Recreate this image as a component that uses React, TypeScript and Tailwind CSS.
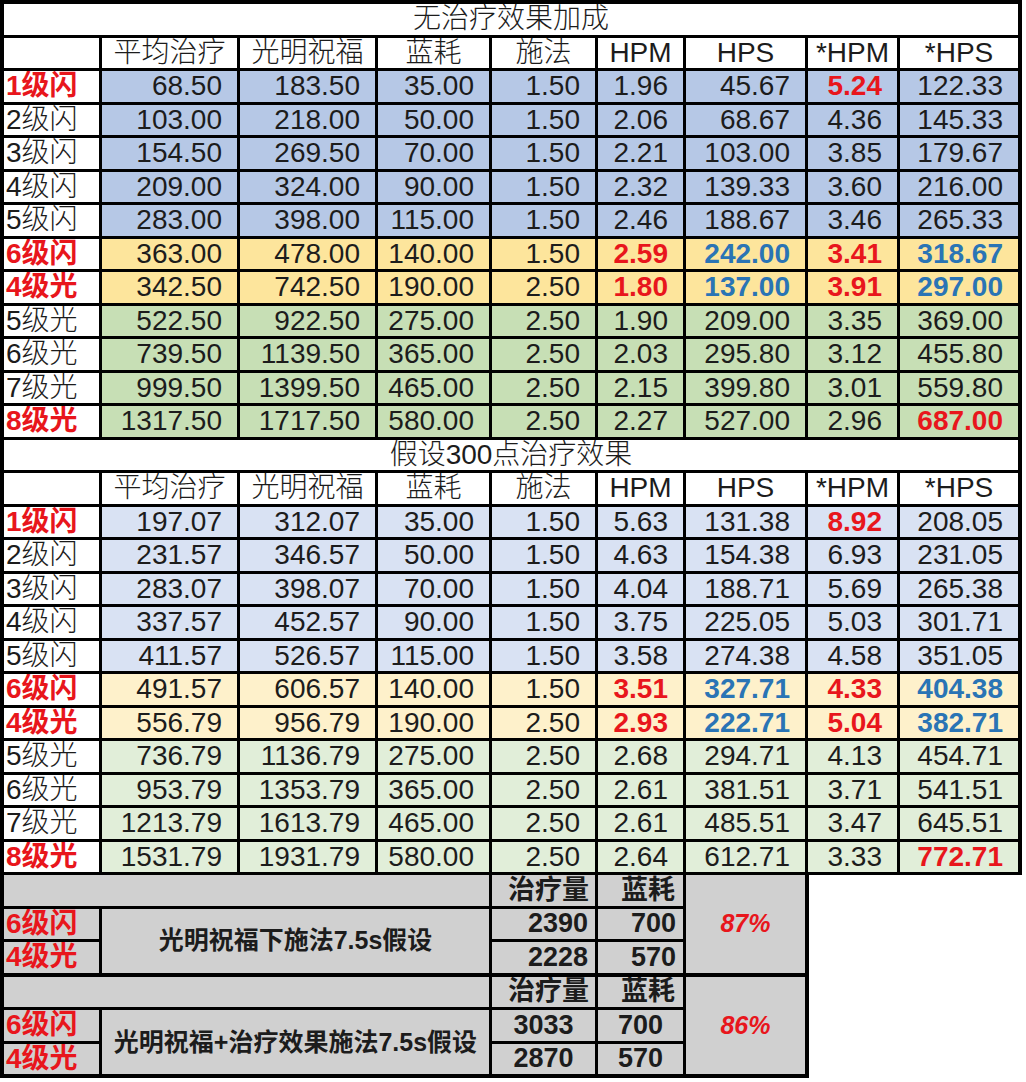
import React from "react";

type Row = { label: string; hot?: boolean; tone: "blue" | "orange" | "green"; cells: string[] };

// "!" marks red bold, "#" marks blue bold
const noBonus: Row[] = [
  { label: "1级闪", hot: true, tone: "blue", cells: ["68.50", "183.50", "35.00", "1.50", "1.96", "45.67", "5.24!", "122.33"] },
  { label: "2级闪", tone: "blue", cells: ["103.00", "218.00", "50.00", "1.50", "2.06", "68.67", "4.36", "145.33"] },
  { label: "3级闪", tone: "blue", cells: ["154.50", "269.50", "70.00", "1.50", "2.21", "103.00", "3.85", "179.67"] },
  { label: "4级闪", tone: "blue", cells: ["209.00", "324.00", "90.00", "1.50", "2.32", "139.33", "3.60", "216.00"] },
  { label: "5级闪", tone: "blue", cells: ["283.00", "398.00", "115.00", "1.50", "2.46", "188.67", "3.46", "265.33"] },
  { label: "6级闪", hot: true, tone: "orange", cells: ["363.00", "478.00", "140.00", "1.50", "2.59!", "242.00#", "3.41!", "318.67#"] },
  { label: "4级光", hot: true, tone: "orange", cells: ["342.50", "742.50", "190.00", "2.50", "1.80!", "137.00#", "3.91!", "297.00#"] },
  { label: "5级光", tone: "green", cells: ["522.50", "922.50", "275.00", "2.50", "1.90", "209.00", "3.35", "369.00"] },
  { label: "6级光", tone: "green", cells: ["739.50", "1139.50", "365.00", "2.50", "2.03", "295.80", "3.12", "455.80"] },
  { label: "7级光", tone: "green", cells: ["999.50", "1399.50", "465.00", "2.50", "2.15", "399.80", "3.01", "559.80"] },
  { label: "8级光", hot: true, tone: "green", cells: ["1317.50", "1717.50", "580.00", "2.50", "2.27", "527.00", "2.96", "687.00!"] },
];

const withBonus: Row[] = [
  { label: "1级闪", hot: true, tone: "blue", cells: ["197.07", "312.07", "35.00", "1.50", "5.63", "131.38", "8.92!", "208.05"] },
  { label: "2级闪", tone: "blue", cells: ["231.57", "346.57", "50.00", "1.50", "4.63", "154.38", "6.93", "231.05"] },
  { label: "3级闪", tone: "blue", cells: ["283.07", "398.07", "70.00", "1.50", "4.04", "188.71", "5.69", "265.38"] },
  { label: "4级闪", tone: "blue", cells: ["337.57", "452.57", "90.00", "1.50", "3.75", "225.05", "5.03", "301.71"] },
  { label: "5级闪", tone: "blue", cells: ["411.57", "526.57", "115.00", "1.50", "3.58", "274.38", "4.58", "351.05"] },
  { label: "6级闪", hot: true, tone: "orange", cells: ["491.57", "606.57", "140.00", "1.50", "3.51!", "327.71#", "4.33!", "404.38#"] },
  { label: "4级光", hot: true, tone: "orange", cells: ["556.79", "956.79", "190.00", "2.50", "2.93!", "222.71#", "5.04!", "382.71#"] },
  { label: "5级光", tone: "green", cells: ["736.79", "1136.79", "275.00", "2.50", "2.68", "294.71", "4.13", "454.71"] },
  { label: "6级光", tone: "green", cells: ["953.79", "1353.79", "365.00", "2.50", "2.61", "381.51", "3.71", "541.51"] },
  { label: "7级光", tone: "green", cells: ["1213.79", "1613.79", "465.00", "2.50", "2.61", "485.51", "3.47", "645.51"] },
  { label: "8级光", hot: true, tone: "green", cells: ["1531.79", "1931.79", "580.00", "2.50", "2.64", "612.71", "3.33", "772.71!"] },
];

const headers = ["平均治疗", "光明祝福", "蓝耗", "施法", "HPM", "HPS", "*HPM", "*HPS"];

const strong = {
  blue: "bg-[#b6c8e6]",
  orange: "bg-[#fde59c]",
  green: "bg-[#c7dfb5]",
};
const soft = {
  blue: "bg-[#d9e2f3]",
  orange: "bg-[#fef1cb]",
  green: "bg-[#e1eed9]",
};

const cell = "flex items-center overflow-hidden whitespace-nowrap";

function Num({ v, bg }: { v: string; bg: string }) {
  let color = "text-[#1c1c1c]";
  let text = v;
  if (v.endsWith("!")) {
    color = "text-[#e8161c] font-bold";
    text = v.slice(0, -1);
  } else if (v.endsWith("#")) {
    color = "text-[#2a74b5] font-bold";
    text = v.slice(0, -1);
  }
  return <div className={`${cell} ${bg} ${color} justify-end pr-[15px]`}>{text}</div>;
}

function Sheet({ title, rows, soft: isSoft, top }: { title: string; rows: Row[]; soft?: boolean; top?: boolean }) {
  const palette = isSoft ? soft : strong;
  return (
    <div
      className={`grid w-[1022px] grid-cols-[95px_135px_135px_111px_103px_85px_119px_89px_118px] auto-rows-[30.5px] gap-[3px] bg-black px-[4px] ${
        top ? "pt-[4px]" : "pt-[3px] pb-[3px]"
      }`}
    >
      <div className={`${cell} col-span-9 justify-center bg-white font-light`}>{title}</div>
      <div className="bg-white" />
      {headers.map((h) => (
        <div key={h} className={`${cell} justify-center bg-white font-light`}>
          {h}
        </div>
      ))}
      {rows.map((r) => (
        <React.Fragment key={r.label}>
          <div
            className={`${cell} justify-start bg-white pl-[2px] ${
              r.hot ? "font-bold text-[#e8161c]" : "font-light"
            }`}
          >
            {r.label}
          </div>
          {r.cells.map((v, i) => (
            <Num key={i} v={v} bg={palette[r.tone]} />
          ))}
        </React.Fragment>
      ))}
    </div>
  );
}

function Summary({ desc, heal, mana, pct, centered }: { desc: string; heal: string[]; mana: string[]; pct: string; centered?: boolean }) {
  const just = centered ? "justify-center" : "justify-end pr-[7px]";
  return (
    <div className="grid w-[809px] grid-cols-[95px_135px_135px_111px_103px_85px_119px] auto-rows-[30.5px] gap-[3px] bg-black px-[4px] pb-[4px]">
      <div className="col-span-4 bg-[#d0d0d0]" />
      <div className={`${cell} justify-end bg-[#d0d0d0] pr-[6px] text-[27px] font-bold`}>治疗量</div>
      <div className={`${cell} justify-end bg-[#d0d0d0] pr-[8px] text-[27px] font-bold`}>蓝耗</div>
      <div className={`${cell} row-span-3 justify-center bg-[#d0d0d0] text-[25px] font-bold italic text-[#e8161c]`}>
        {pct}
      </div>
      <div className={`${cell} bg-[#d0d0d0] pl-[2px] text-[28px] font-bold text-[#e8161c]`}>6级闪</div>
      <div className={`${cell} col-span-3 row-span-2 justify-center bg-[#d0d0d0] text-[25px] font-bold`}>{desc}</div>
      <div className={`${cell} ${just} bg-[#d0d0d0] text-[27px] font-bold`}>{heal[0]}</div>
      <div className={`${cell} ${just} bg-[#d0d0d0] text-[27px] font-bold`}>{mana[0]}</div>
      <div className={`${cell} bg-[#d0d0d0] pl-[2px] text-[28px] font-bold text-[#e8161c]`}>4级光</div>
      <div className={`${cell} ${just} bg-[#d0d0d0] text-[27px] font-bold`}>{heal[1]}</div>
      <div className={`${cell} ${just} bg-[#d0d0d0] text-[27px] font-bold`}>{mana[1]}</div>
    </div>
  );
}

export default function App() {
  return (
    <div className="min-h-screen bg-white font-['Liberation_Sans','Noto_Sans_CJK_SC',sans-serif] text-[28px] leading-none text-[#1c1c1c]">
      <Sheet title="无治疗效果加成" rows={noBonus} top />
      <Sheet title="假设300点治疗效果" rows={withBonus} soft />
      <Summary desc="光明祝福下施法7.5s假设" heal={["2390", "2228"]} mana={["700", "570"]} pct="87%" />
      <Summary desc="光明祝福+治疗效果施法7.5s假设" heal={["3033", "2870"]} mana={["700", "570"]} pct="86%" centered />
    </div>
  );
}
